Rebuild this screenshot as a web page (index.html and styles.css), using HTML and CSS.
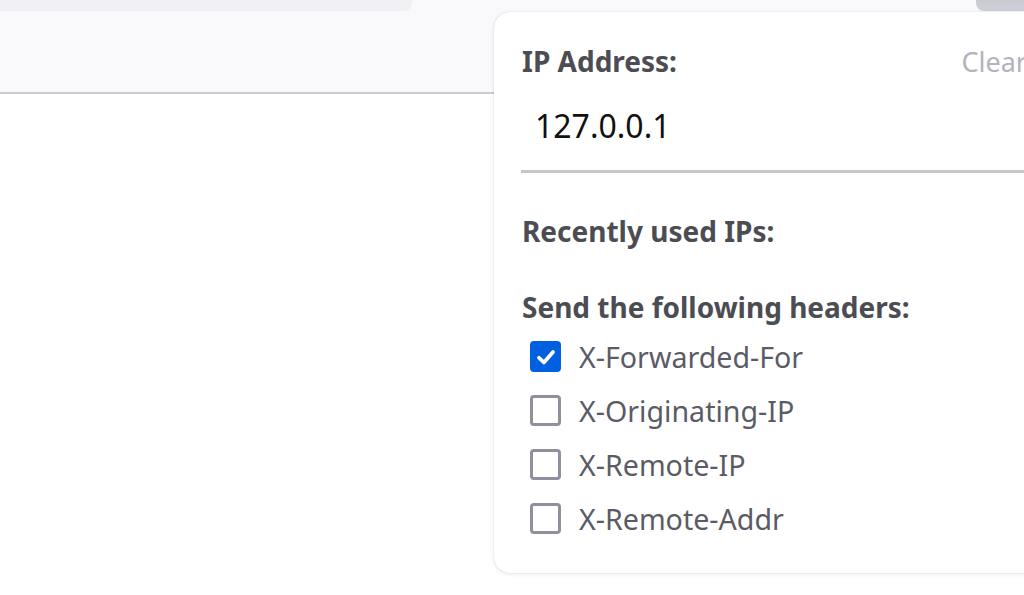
FILE: index.html
```html
<!DOCTYPE html>
<html>
<head>
<meta charset="utf-8">
<link rel="stylesheet" href="styles.css">
</head>
<body>
<div class="toolbar">
  <div class="tabstrip">
    <div class="tab-left"></div>
    <div class="tab-gap"></div>
    <div class="tab-right"></div>
  </div>
</div>
<div class="content"></div>
<div class="panel">
  <div class="head-row">
    <span class="heading">IP Address:</span>
    <span class="clear">Clear</span>
  </div>
  <div class="ip-input">127.0.0.1</div>
  <div class="heading recent">Recently used IPs:</div>
  <div class="heading send">Send the following headers:</div>
  <ul class="checks">
    <li class="check-row"><span class="box checked"><svg viewBox="0 0 16 16" width="24" height="24"><path d="M3.3 8.5 L6.6 11.6 L12.7 4.7" fill="none" stroke="#fff" stroke-width="2.5" stroke-linecap="round" stroke-linejoin="round"/></svg></span><span class="label">X-Forwarded-For</span></li>
    <li class="check-row"><span class="box"></span><span class="label">X-Originating-IP</span></li>
    <li class="check-row"><span class="box"></span><span class="label">X-Remote-IP</span></li>
    <li class="check-row"><span class="box"></span><span class="label">X-Remote-Addr</span></li>
  </ul>
</div>
</body>
</html>
```
FILE: styles.css
```css
* { box-sizing: border-box; }
html, body { margin: 0; padding: 0; }
body {
  width: 1024px;
  height: 595px;
  overflow: hidden;
  background: #ffffff;
  font-family: "Noto Sans", "Open Sans", sans-serif;
  position: relative;
}
.toolbar {
  height: 94px;
  background: #f9f9fb;
  border-bottom: 2px solid #cbcbcf;
}
.tabstrip {
  display: flex;
  height: 11px;
}
.tab-left {
  width: 412px;
  background: #f0f0f4;
  border-bottom-right-radius: 8px;
}
.tab-gap { flex: 1; }
.tab-right {
  width: 48px;
  background: linear-gradient(#c9c9d1, #cfcfd8);
  border-bottom-left-radius: 8px;
}
.panel {
  position: absolute;
  left: 494px;
  top: 12px;
  width: 561px;
  height: 561px;
  background: #ffffff;
  border-radius: 16px;
  box-shadow: 0 1px 4px rgba(0,0,0,0.10), 0 0 1px rgba(0,0,0,0.18);
  padding: 30px 28px 0 28px;
}
.head-row {
  display: flex;
  justify-content: space-between;
  align-items: baseline;
  height: 38px;
}
.heading {
  font-weight: 700;
  font-size: 28px;
  color: #4c4c53;
  line-height: 38px;
}
.clear {
  font-size: 27px;
  color: #b3b3bb;
  line-height: 38px;
}
.ip-input {
  margin-top: 26px;
  margin-left: -1px;
  padding: 0 0 24px 14px;
  font-size: 32px;
  line-height: 40px;
  color: #111;
  border-bottom: 3px solid #c6c6c6;
  margin-right: -60px;
}
.recent { margin-top: 39px; }
.send { margin-top: 38px; }
.checks {
  list-style: none;
  margin: 15px 0 0 0;
  padding: 0 0 0 8px;
  display: flex;
  flex-direction: column;
  gap: 23px;
}
.check-row {
  display: flex;
  align-items: center;
  gap: 18px;
  height: 31px;
}
.box {
  width: 31px;
  height: 31px;
  border: 3px solid #8f8f9d;
  border-radius: 4px;
  display: flex;
  align-items: center;
  justify-content: center;
  flex: none;
}
.box.checked {
  background: #0060df;
  border-color: #0060df;
}
.label {
  font-size: 28.6px;
  color: #5b5b66;
  line-height: 31px;
}
```
